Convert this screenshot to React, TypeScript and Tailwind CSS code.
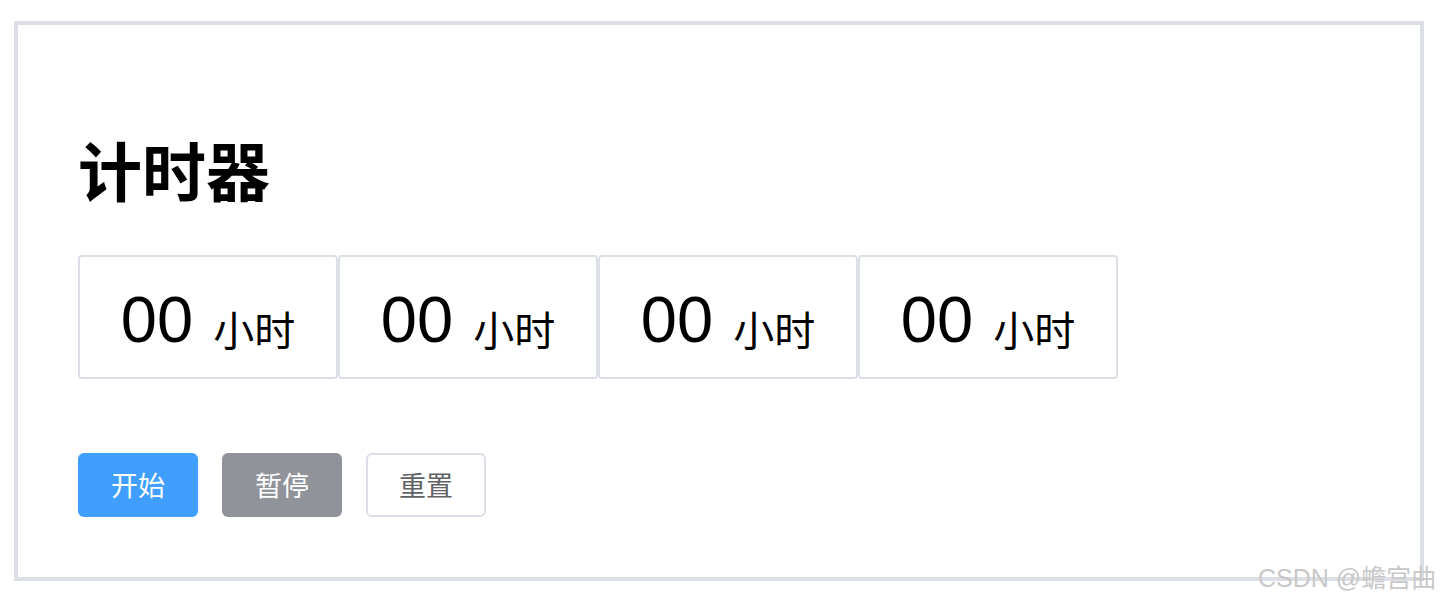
const units = ['小时', '小时', '小时', '小时']

export default function App() {
  return (
    <div className="relative w-[1444px] h-[606px] bg-white pt-[21px] pl-[14px] font-['Liberation_Sans','Noto_Sans_CJK_SC',sans-serif]">
      <div className="w-[1410px] h-[560px] border-4 border-[#dcdfe6] px-[60px] pt-[103px]">
        <h1 className="text-[64px] leading-[80px] font-bold text-black font-['Noto_Sans_CJK_SC',sans-serif]">
          计时器
        </h1>

        <div className="flex mt-[47px]">
          {units.map((u, i) => (
            <div
              key={i}
              className="w-[260px] h-[124px] border-2 border-[#dcdfe6] rounded-[4px] flex items-center justify-center"
            >
              <span className="text-[65px] leading-none text-black mt-[4px]">00</span>
              <span className="ml-[20px] text-[41px] leading-none text-black mt-[22px] font-['Noto_Sans_CJK_SC',sans-serif]">
                {u}
              </span>
            </div>
          ))}
        </div>

        <div className="flex gap-6 mt-[74px] font-['Noto_Sans_CJK_SC',sans-serif]">
          <button className="w-[120px] h-[64px] rounded-[6px] bg-[#409eff] text-white text-[27px]">
            开始
          </button>
          <button className="w-[120px] h-[64px] rounded-[6px] bg-[#909399] text-white text-[27px]">
            暂停
          </button>
          <button className="w-[120px] h-[64px] rounded-[6px] bg-white border-2 border-[#dcdfe6] text-[#606266] text-[27px]">
            重置
          </button>
        </div>
      </div>

      <div className="absolute left-[1258px] top-[562px] text-[25px] leading-[32px] text-[#c8c8c8] font-['Liberation_Sans','Noto_Sans_CJK_SC',sans-serif]">
        CSDN @蟾宫曲
      </div>
    </div>
  )
}
